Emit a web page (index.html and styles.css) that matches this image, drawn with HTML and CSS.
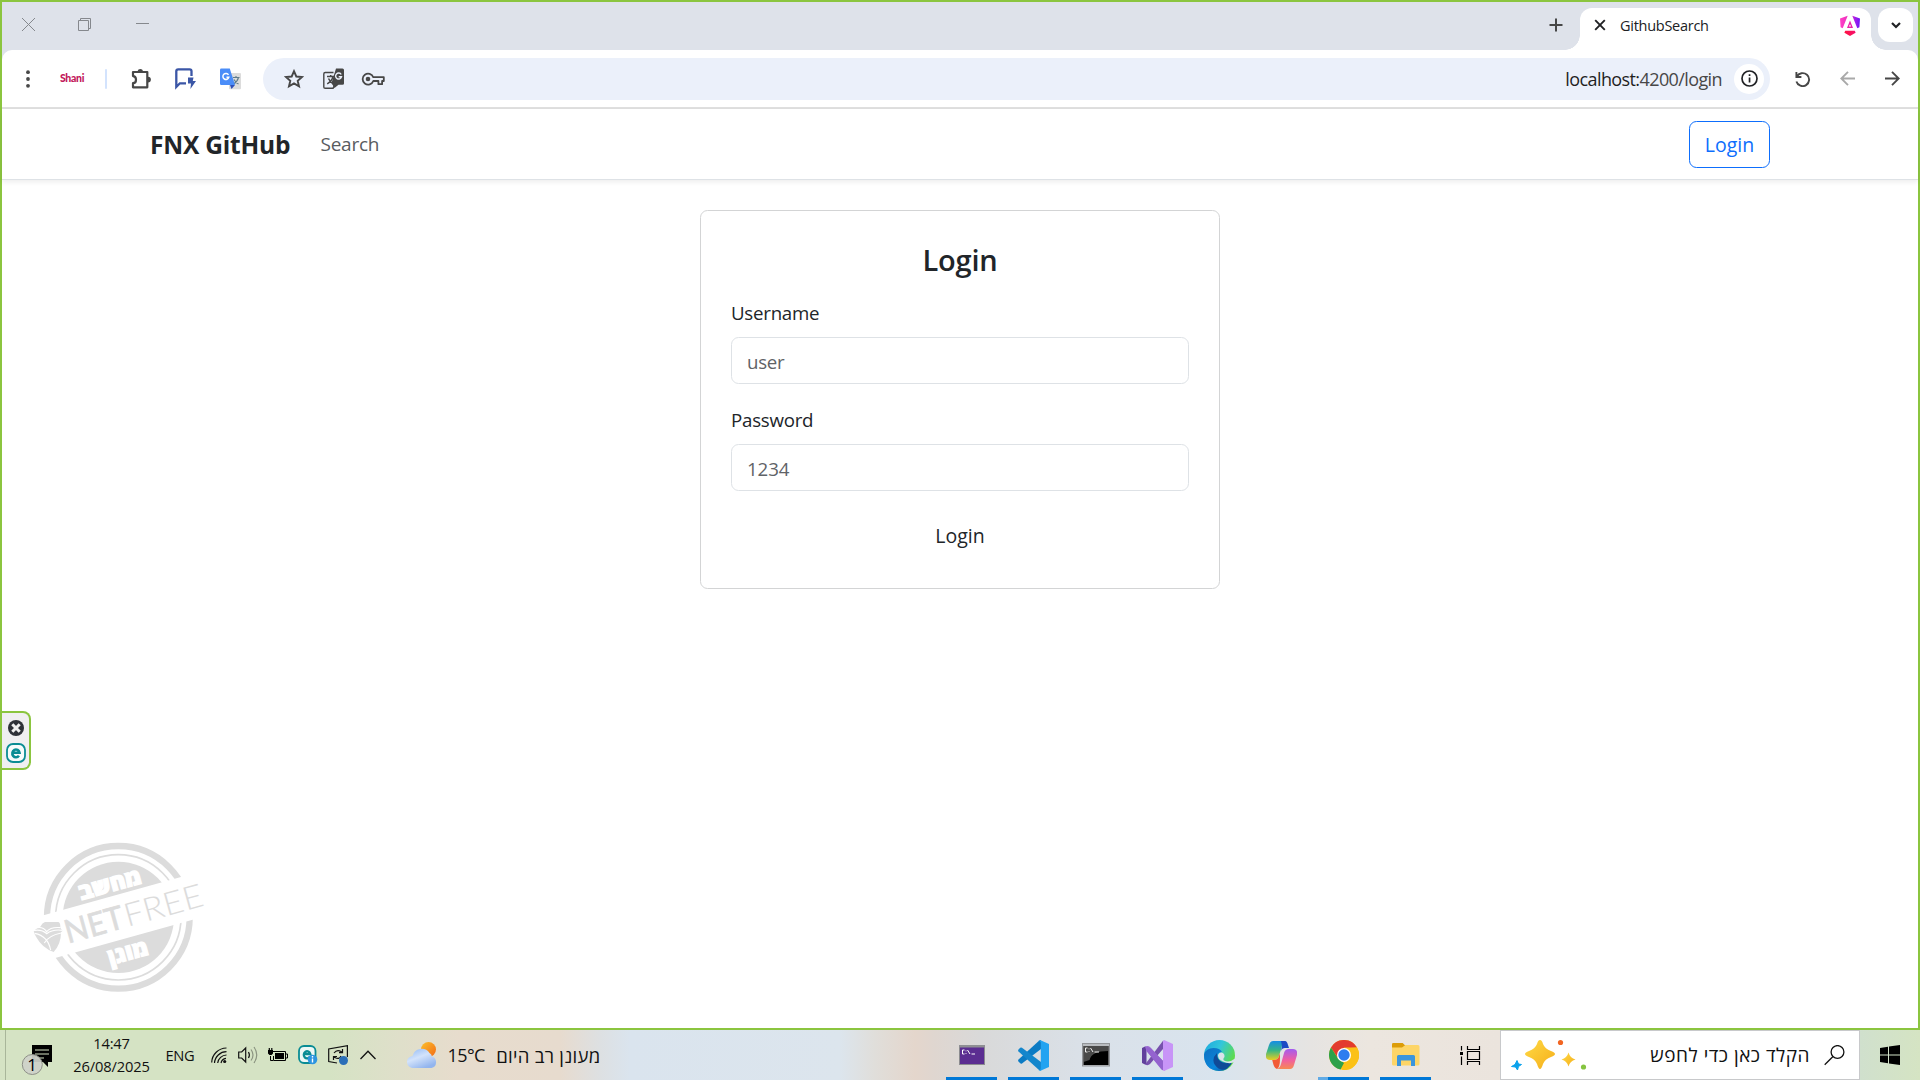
FILE: index.html
```html
<!DOCTYPE html>
<html lang="en">
<head>
<meta charset="utf-8">
<title>GithubSearch</title>
<link rel="stylesheet" href="styles.css">
</head>
<body>
<div class="window">
  <header class="titlebar">
    <div class="controls">
      <svg class="ctl-close" width="13" height="13" viewBox="0 0 13 13"><path d="M0 0L13 13M13 0L0 13"/></svg>
      <svg class="ctl-restore" width="13" height="13" viewBox="0 0 13 13"><path d="M.5 2.500h10v10H.5zM2.500 2.500V.5h10v10h-2"/></svg>
      <svg class="ctl-min" width="13" height="13" viewBox="0 0 13 13"><path d="M0 5.500h13"/></svg>
    </div>
    <svg class="new-tab" width="14" height="14" viewBox="0 0 14 14"><path d="M7 .5v13M.5 7h13"/></svg>
    <div class="tab">
      <svg class="tab-close" width="12" height="12" viewBox="0 0 12 12"><path d="M1.200 1.200l9.600 9.600M10.800 1.200l-9.600 9.600"/></svg>
      <span class="tab-title">GithubSearch</span>
      <svg class="angular" width="20" height="21" viewBox="0 0 20 21">
        <defs>
          <linearGradient id="ng" x1="0" y1="0" x2="1" y2="0"><stop offset="0" stop-color="#ff41c8"/><stop offset=".5" stop-color="#e92bb9"/><stop offset=".8" stop-color="#9a1cf0"/><stop offset="1" stop-color="#6a18f5"/></linearGradient>
          <linearGradient id="ngr" x1="0" y1="0" x2="1" y2="0"><stop offset="0" stop-color="#ff1340"/><stop offset="1" stop-color="#f5106e"/></linearGradient>
        </defs>
        <path fill="url(#ng)" d="M7.700.8L2.700 13.300.6 12.300 0 3.500zM12.300.8l5 12.500 2.100-1 .6-8.800z"/>
        <path fill="url(#ngr)" d="M5.200 15.800h9.600l.8 2L10 21l-5.600-3.200z"/>
        <path fill="#ec1fa8" d="M10 5.500l3 7.500H7z"/>
        <path fill="#fff" d="M10 9.300l1.100 2.300H8.900z"/>
      </svg>
    </div>
    <div class="tab-search"><svg width="10" height="7" viewBox="0 0 10 7"><path d="M1 1l4 4 4-4"/></svg></div>
  </header>

  <div class="toolbar">
    <svg class="menu" width="4" height="18" viewBox="0 0 4 18"><circle cx="2" cy="2.200" r="1.900"/><circle cx="2" cy="9" r="1.900"/><circle cx="2" cy="15.800" r="1.900"/></svg>
    <span class="profile">Shani</span>
    <span class="divider"></span>
    <svg class="puzzle" width="21" height="22" viewBox="0 0 21 22"><path d="M2 4h14.300v15.300H2v-4.100c1.700 0 3-1.200 3-3.500S3.700 8.100 2 8.100z" fill="none" stroke="#474747" stroke-width="2.200" stroke-linejoin="round"/><path fill="#474747" d="M6.500 3.200a2.900 2.900 0 0 1 5.600 0zM17 8.700a2.900 2.900 0 0 1 0 5.800z"/></svg>
    <svg class="chat" width="21" height="22" viewBox="0 0 21 22"><path d="M16.500 8V3.200q0-1.900-1.900-1.900H3.200q-1.900 0-1.900 1.900v15.700l3.600-3.600H11" fill="none" stroke="#3b56a6" stroke-width="2.300"/><path fill="#3b56a6" d="M13 9.500h5.500L17.800 13H21l-5.600 8 .6-5.500h-3z"/></svg>
    <svg class="gtranslate" width="21" height="22" viewBox="0 0 21 22"><rect x="9" y="5" width="12" height="16.300" rx="1" fill="#dcdcdc"/><path d="M13 9.500h6.500M16 8v1.500M18.500 9.500q-1 4-5 6.500M14 11.500q1.500 3 4.500 4.500" fill="none" stroke="#607d8b" stroke-width="1.100"/><path fill="#2f50b8" d="M10 17h5l-3.500 4z"/><path fill="#4b8df8" d="M1.200.5h8.600L15 17H1.200Q0 17 0 15.800V1.700Q0 .5 1.200.5z"/><path d="M8.500 6.900a3 3 0 1 0 .3 2.400H6.500" fill="none" stroke="#fff" stroke-width="1.500"/></svg>
    <div class="omnibox">
      <svg class="star" width="20" height="20" viewBox="0 0 20 20"><path d="M10 2.200l2.300 5.300 5.700.5-4.300 3.800 1.300 5.600-5-3-5 3 1.300-5.600L2 8l5.700-.5z" fill="none" stroke="#474747" stroke-width="1.900"/></svg>
      <svg class="page-translate" width="21" height="21" viewBox="0 0 21 21"><path d="M10.500 4.500H2.200q-1.400 0-1.400 1.400V19q0 1.200 1.400 1.200h7.900l2-4.500" fill="none" stroke="#474747" stroke-width="1.400"/><path d="M4 8.500h7.500M7.700 7v1.500M10 8.800q-1.200 4.500-5.800 7M5.500 10.500q1.500 3.500 5 5.500" fill="none" stroke="#474747" stroke-width="1.500"/><path fill="#474747" d="M13 .5h6.500q1.500 0 1.500 1.500v13.500q0 1.200-1.500 1.200h-4L11.500 20 8.500 15z"/><path d="M18.200 6.500a3 3 0 1 0 .3 2.300h-2.800" fill="none" stroke="#ebf0fa" stroke-width="1.400"/></svg>
      <svg class="key" width="24" height="14" viewBox="0 0 24 14"><path d="M12.300 5.200H22.800V9h-1.700v3.200h-3.700V9h-5.100a5.500 5.500 0 1 1 0-3.800z" fill="none" stroke="#474747" stroke-width="1.800" stroke-linejoin="round"/><circle cx="7" cy="7" r="2.300" fill="#474747"/></svg>
      <span class="url"><b>localhost:</b>4200/login</span>
      <span class="site-info"><svg width="17" height="17" viewBox="0 0 17 17"><circle cx="8.500" cy="8.500" r="7.500" fill="none" stroke="#202124" stroke-width="1.700"/><path d="M7.700 7.500h1.700v5H7.700zM7.700 4.300h1.700V6H7.700z" fill="#202124"/></svg></span>
    </div>
    <svg class="reload" width="16" height="16" viewBox="0 0 16 16"><path d="M1.400 1v5h5M1.800 5.700A6.500 6.500 0 1 1 1.400 10.500"/></svg>
    <svg class="back" width="15" height="15" viewBox="0 0 15 15"><path d="M15 7.500H1.500M8 .8L1.300 7.500 8 14.200"/></svg>
    <svg class="forward" width="15" height="15" viewBox="0 0 15 15"><path d="M0 7.500h13.500M7 .8l6.700 6.700L7 14.200"/></svg>
  </div>

  <div class="page">
    <nav class="navbar">
      <a class="brand">FNX GitHub</a>
      <a class="nav-link">Search</a>
      <button class="btn-outline">Login</button>
    </nav>
    <main class="card">
      <h1>Login</h1>
      <label>Username</label>
      <input type="text" placeholder="user">
      <label>Password</label>
      <input class="digits" type="text" placeholder="1234">
      <button class="submit">Login</button>
    </main>
  </div>

  <div class="eset-tab">
    <svg width="16" height="16" viewBox="0 0 16 16"><circle cx="8" cy="8" r="8" fill="#2e3138"/><path d="M4.300 4.300l7.400 7.400M11.700 4.300l-7.400 7.400" stroke="#f0f0f0" stroke-width="3"/></svg>
    <svg width="20" height="20" viewBox="0 0 20 20"><rect x="1" y="1" width="18" height="18" rx="6" fill="#f6fbfb" stroke="#0a8c94" stroke-width="1.800"/><path d="M6.500 9.700h7A3.600 3.900 0 1 0 12.900 12.600" fill="none" stroke="#0a8c94" stroke-width="2.600"/></svg>
  </div>

  <svg class="stamp" width="177" height="157" viewBox="90 450 531 471">
    <g fill="none" stroke="#dcdcdc"><circle cx="355" cy="682" r="214" stroke-width="19"/><circle cx="355" cy="682" r="188" stroke-width="5"/></g>
    <circle cx="355" cy="682" r="167" fill="#dcdcdc"/>
    <path fill="#fff" d="M90 687L640 534V672L90 825z"/>
    <g transform="translate(213 758) rotate(-15.500)" fill="#dcdcdc">
      <text class="st-net" x="-9" y="0" textLength="180" lengthAdjust="spacingAndGlyphs">NET</text>
      <text class="st-free" x="176" y="0" textLength="242" lengthAdjust="spacingAndGlyphs">FREE</text>
    </g>
    <g fill="#fff" class="st-heb">
      <text transform="translate(336 605) rotate(-15.500)" text-anchor="middle" textLength="192" lengthAdjust="spacingAndGlyphs">מחשב</text>
      <text transform="translate(390 809) rotate(-15.500)" text-anchor="middle" textLength="122" lengthAdjust="spacingAndGlyphs">מוגן</text>
    </g>
    <path fill="#dcdcdc" d="M101 722q10-8 20-12 6-12 14-14h40q6 2 6 14 1 8 7 12l-5 5q0 36-22 59-34-11-52-44-7-12-8-20z"/>
    <path fill="none" stroke="#fff" stroke-width="3.500" d="M98 722q26-6 42 9 18-14 48-10M104 730q40 8 48 50M183 729q-38 8-50 30M112 713q18-3 28 12 12-15 42-12"/>
  </svg>
</div>

<footer class="taskbar">
  <div class="tray">
    <svg class="notif" width="32" height="32" viewBox="0 0 32 32"><path d="M11 0h20v17h-4v5l-5-5H11z"/><path d="M14 5h14M14 9h14M14 13h9" stroke="#d6e3c4" stroke-width="1.200"/><circle cx="11.300" cy="19.500" r="10" fill="#cfd2c9" fill-opacity=".93" stroke="#8d8f88"/><text x="11" y="25.500" text-anchor="middle">1</text></svg>
    <div class="clock"><span class="time">14:47</span><span class="date">26/08/2025</span></div>
    <span class="lang">ENG</span>
    <svg class="wifi" width="17" height="17" viewBox="0 0 17 17" fill="none" stroke="#111" stroke-width="1.200"><path d="M.7 15.500A15 15 0 0 1 15.500 1M3.500 16A12 12 0 0 1 15.500 4.700M6.700 16A9 9 0 0 1 15.500 8M10 16a6 6 0 0 1 5-4.600"/><circle cx="13.700" cy="14.500" r="1.600" fill="#111" stroke="none"/></svg>
    <svg class="sound" width="20" height="18" viewBox="0 0 20 18" fill="none" stroke="#111" stroke-width="1.200"><path d="M.7 6h3l4-4v14l-4-4h-3z"/><path d="M10.500 6q1.800 3 0 6"/><path d="M13 3.500q4 5.500 0 11M16 1q5.500 8 0 16" stroke="#8b9480"/></svg>
    <svg class="battery" width="20" height="15" viewBox="0 0 20 15"><path fill="none" stroke="#000" d="M5 3.500h12.500v9H5.500V8M18 6h1.500v4H18M2.500 8v4.500H5"/><path d="M7 5h9v6H7zM0 2h5v3.500L3.500 7h-2L0 5.500zM.7 0h1.200v2H.7zM3.200 0h1.200v2H3.200z"/></svg>
    <svg class="eset" width="20" height="20" viewBox="0 0 20 20"><rect x="1" y="1" width="16.500" height="17" rx="5" fill="#eef8f6" stroke="#0a8c94" stroke-width="1.800"/><path d="M5.800 9h6.500A3.300 3.600 0 1 0 12 11.500" fill="none" stroke="#0a8c94" stroke-width="2.300"/><circle cx="14.500" cy="14.500" r="4.800" fill="#2d95e0"/><path d="M14.500 13.500v4M14.500 11v1.500" stroke="#fff" stroke-width="1.400"/></svg>
    <svg class="update" width="20" height="20" viewBox="0 0 20 20" fill="none" stroke="#111" stroke-width="1.200"><path d="M9 18L.7 16.500V4L19.400.7V12M6 8q3-4 7-1.500l1.500 1M14.500 4v3.700H11M13 11q-2 4-6 1.500L5.500 12M5.500 15v-3.500H9"/><circle cx="15.500" cy="15.500" r="4.500" fill="#2b6fb8" stroke="none"/></svg>
    <svg class="chev" width="16" height="10" viewBox="0 0 16 10"><path d="M.5 9L8 1.200 15.500 9" fill="none" stroke="#111" stroke-width="1.300"/></svg>
    <svg class="weather" width="31" height="26" viewBox="0 0 31 26"><defs><linearGradient id="sun" x1="0" y1="0" x2="1" y2="1"><stop offset="0" stop-color="#fbc02a"/><stop offset="1" stop-color="#f36a16"/></linearGradient><linearGradient id="cloud" x1="0" y1="0" x2=".6" y2="1"><stop offset="0" stop-color="#8db7f5"/><stop offset=".5" stop-color="#d3e3fb"/><stop offset="1" stop-color="#93b5ee"/></linearGradient></defs><circle cx="21.500" cy="7.500" r="7.500" fill="url(#sun)"/><path fill="url(#cloud)" d="M6.500 26a6 6 0 0 1-1-12A9.500 9.500 0 0 1 22.500 11a4.500 4.500 0 0 1 2.500 3.500A6 6 0 0 1 24.500 26z"/></svg>
    <span class="temp">15°C</span>
    <span class="forecast" lang="he" dir="rtl">מעונן רב היום</span>
  </div>
  <div class="apps">
    <div class="app running"><svg width="26" height="20" viewBox="0 0 26 20"><rect x=".5" y=".5" width="25" height="19" fill="#5b2d91" stroke="#8b8b8f"/><path d="M0 0h26v2.500H0z" fill="#8f8f93"/><path d="M5.500 5h-2v4h2M7 5.500v.8M7 8v.8M8.500 5l2.500 4M12.500 9H16" fill="none" stroke="#fff"/></svg></div>
    <div class="app running"><svg width="31" height="31" viewBox="0 0 31 31"><path fill="#0b7bc4" d="M23 0v9L4 23.500q-1 .5-1.800-.3L.5 21.500q-.8-1 0-2L21 .8z"/><path fill="#1486cc" d="M.5 11.500q-.8-1 0-2l1.700-1.700Q3 7.200 4 7.700L23 22v8.500L21 30z"/><path fill="#23a3f1" d="M22.500.3L31 4v23l-8.500 3.700q-1.200.3-2-.7 2 .5 2.300-1.500V2.500Q22.500.5 20.500 1q.8-1 2-.7z"/></svg></div>
    <div class="app running"><svg width="28" height="24" viewBox="0 0 28 24"><rect x=".5" y=".5" width="27" height="22.500" fill="#b9bcc0" stroke="#929599"/><path d="M1.500 3h25v19h-25z"/><path fill="#686868" d="M1.500 3h25v5q-17 0-19 9l-6 2z" opacity=".7"/><path d="M5.500 5h-2v4h2M7 5.500v.8M7 8v.8M8.500 5l2.500 4M12.500 9H17" fill="none" stroke="#eee"/></svg></div>
    <div class="app running"><svg width="31" height="31" viewBox="0 0 31 31"><path fill="#61409c" d="M0 8l3-1.500L4.500 7v17L3 24.500 0 23z"/><path fill="#7751ad" d="M3 24.500L21 .8V9L8 24q-2 2-5 .5z"/><path fill="#9c6bd3" d="M3 6.500q3-1 5 .5L23 23v7.500L21 30 4.500 11z"/><path fill="#c895f7" d="M22 0l9 4v23l-9 4q-1-.3-1-1V1q0-.7 1-1z"/><path fill="#9463cf" d="M9 8.500L21 21v9q-1 .5-2-1L4.500 11V7z"/></svg></div>
    <div class="app"><svg width="31" height="31" viewBox="0 0 31 31"><defs><linearGradient id="e1" x1="0" y1="0" x2="1" y2=".5"><stop offset="0" stop-color="#1ca7df"/><stop offset=".5" stop-color="#32c6db"/><stop offset="1" stop-color="#5fdc4b"/></linearGradient><linearGradient id="e2" x1="0" y1="0" x2="1" y2="1"><stop offset="0" stop-color="#0f6fc0"/><stop offset=".6" stop-color="#0a88dc"/><stop offset="1" stop-color="#0c4b9c"/></linearGradient></defs><circle cx="15.500" cy="15.500" r="15.500" fill="url(#e1)"/><path fill="url(#e2)" d="M0 14.500Q2 8 9.500 8q6.500 0 8.500 4-3.500 0-4.500 3-1 5 5 7 5 1.500 10-1-4 10-13.500 10Q0 30 0 14.500z"/><path fill="#104b97" d="M13 13q-6 6-2 12 5 7 12 3.500 4-3 5.500-7-5 3-10 1-6-3-5.500-9.500z"/><path fill="#dae3eb" d="M19 21.500q-5-2-5-6.500 2-3.500 5-2 2 1.500 1.500 4-2 2-.5 3.500 3 1.500 7 .5l4-2.500v3q-5 3.500-12 0z"/></svg></div>
    <div class="app"><svg width="31" height="28" viewBox="0 0 31 28"><defs><linearGradient id="c1" x1="0" y1="0" x2="0" y2="1"><stop offset="0" stop-color="#168de5"/><stop offset=".5" stop-color="#38b684"/><stop offset="1" stop-color="#e9ce20"/></linearGradient><linearGradient id="c2" x1="0" y1="0" x2="0" y2="1"><stop offset="0" stop-color="#a35cf0"/><stop offset=".55" stop-color="#f05fa2"/><stop offset="1" stop-color="#f78a52"/></linearGradient></defs><path fill="url(#c1)" d="M7 0h13q-3 1-4 5l-3 10q-1 4-5 4H4q-5 0-4-6L3 4q1-4 4-4z"/><path fill="#1d4bc4" d="M15 0h4q2 0 3 4l1 3h-4q-3 0-4 3l1-5z"/><path fill="url(#c2)" d="M24 28H11q3-1 4-5l3-11q1-4 5-4h4q5 0 4 6l-3 10q-1 4-4 4z"/><path fill="#f25a36" d="M8 19q4 0 5-4l1-3v6q0 8-3 10-3-1-4-6l-.8-3z"/></svg></div>
    <div class="app running grouped"><svg width="30" height="30" viewBox="0 0 30 30"><circle cx="15" cy="15" r="15" fill="#fbc116"/><path fill="#e33b2e" d="M2 7.500a15 15 0 0 1 26 0H15L9 18z"/><path fill="#2da14a" d="M2 7.500L9 18.500l6 4.500-3.500 6.600A15 15 0 0 1 2 7.500z"/><path fill="#fbc116" d="M28 7.500A15 15 0 0 1 13 29.900L21.500 18V8z"/><circle cx="15" cy="15" r="7" fill="#fff"/><circle cx="15" cy="15" r="5.700" fill="#2d7def"/></svg></div>
    <div class="app running"><svg width="28" height="24" viewBox="0 0 28 24"><path fill="#dc9c08" d="M0 1.300Q0 0 1.300 0h9.400l3 3v4H0z"/><path fill="#fdd567" d="M0 4.500h10L13.500 2H26q1.500 0 1.500 1.500V21q0 1.500-1.500 1.500H1.500Q0 22.500 0 21z"/><path fill="#3b95dc" d="M5 13.500Q5 12 6.500 12h15q1.500 0 1.500 1.500V23h-4v-5.500H9V23H5z"/></svg></div>
  </div>
  <svg class="taskview" width="21" height="19" viewBox="0 0 21 19"><path d="M1.500 0v4.500M1.500 10.500V19M7.500 0v3.500h12V0M7.500 5.500h12v8h-12zM7.500 19v-3.500h12V19" fill="none" stroke="#000" stroke-width="1.200"/><path d="M0 6h3v3H0z"/></svg>
  <div class="search">
    <svg class="sparkles" width="78" height="33" viewBox="0 0 78 33"><defs><linearGradient id="gold" x1="0" y1="0" x2="1" y2="1"><stop offset="0" stop-color="#ffda45"/><stop offset="1" stop-color="#f5ae1a"/></linearGradient></defs><path fill="url(#gold)" d="M30 1q2 0 3 4 2 5 8 7 4 1.500 4 3t-4 3q-6 2-8 7-1.500 5-3 5t-3-5q-2-5-8-7-4-1.500-4-3t4-3q6-2 8-7 1-4 3-4z"/><path fill="url(#gold)" d="M58.500 13.500q1.500 5.500 7 7-5.500 1.500-7 7-1.500-5.500-7-7 5.500-1.500 7-7z"/><path fill="#0aa2ec" stroke="#0aa2ec" d="M7 21.500l1.500 3.500 3 .5-3 2-1 3.500-2-3-4-.5 3.500-2z"/><circle cx="50.500" cy="3.500" r="2.600" fill="#f26522"/><circle cx="73.500" cy="28" r="2.600" fill="#85c440"/></svg>
    <span class="search-text" lang="he" dir="rtl">הקלד כאן כדי לחפש</span>
    <svg class="magnifier" width="21" height="21" viewBox="0 0 21 21"><circle cx="13.500" cy="7" r="6.400" fill="none" stroke="#111" stroke-width="1.300"/><path d="M9 11.500L.7 19.800" stroke="#111" stroke-width="1.300"/></svg>
  </div>
  <svg class="start" width="20" height="20" viewBox="0 0 20 20"><path d="M0 2.900L8 1.700v7.800H0zM9 1.500L20 0v9.500H9zM0 10.500h8v7.800l-8-1.200zM9 10.500h11V20L9 18.500z"/></svg>
</footer>
</body>
</html>
```
FILE: styles.css
```css
* { box-sizing: border-box; }
body {
  margin: 0; width: 1920px; height: 1080px; overflow: hidden;
  display: flex; flex-direction: column;
  font-family: "Open Sans", "Noto Sans", sans-serif; color: #212529; background: #fff;
}
svg { display: block; flex: none; }
span, a, button { white-space: nowrap; }

.window { position: relative; height: 1030px; border: 2px solid #8bc53f; display: flex; flex-direction: column; background: #dee2ea; }

/* Title bar */
.titlebar { height: 48px; flex: none; display: flex; }
.controls { display: flex; flex: 1; padding: 16px 0 0 20px; fill: none; stroke: #85888d; }
.ctl-restore { margin-left: 43px; }
.ctl-min { margin-left: 45px; }
.new-tab { margin: 16px 17px 0 0; stroke: #474747; stroke-width: 2; }
.tab {
  position: relative; width: 291px; margin-top: 6px; padding: 0 11px 8px 14px;
  display: flex; align-items: center; background: #fff; border-radius: 12px 12px 0 0;
}
.tab::before, .tab::after { content: ""; position: absolute; bottom: 0; width: 15px; height: 15px; }
.tab::before { left: -15px; background: radial-gradient(circle at 0 0, transparent 14.500px, #fff 15px); }
.tab::after { right: -15px; background: radial-gradient(circle at 100% 0, transparent 14.500px, #fff 15px); }
.tab-close { stroke: #202124; stroke-width: 1.900; }
.tab-title { margin-left: 14px; flex: 1; font-size: 14.500px; letter-spacing: -.27px; color: #202124; }
.tab-search { width: 35px; height: 34px; margin: 6px 5px 0 7px; border-radius: 12px; background: #fff; display: grid; place-items: center; fill: none; stroke: #202124; stroke-width: 2.200; }

/* Toolbar */
.toolbar { height: 57px; flex: none; display: flex; align-items: center; background: #fff; border-radius: 10px 10px 0 0; }
.menu { margin-left: 23.500px; fill: #474747; }
.profile { width: 45px; text-align: center; margin: 0 0 2px 20px; font: 900 10.500px "Lato", sans-serif; letter-spacing: -.3px; color: #c2185b; }
.divider { width: 2.500px; height: 20px; margin-left: 10px; background: #d3e3fd; border-radius: 1px; }
.puzzle { margin-left: 24px; }
.chat { margin-left: 23px; }
.gtranslate { margin-left: 24px; }
.omnibox { width: 1507px; height: 42px; margin-left: 22px; padding: 0 6px 0 21px; border-radius: 21px; background: #ebf0fa; display: flex; align-items: center; }
.page-translate { margin-left: 19px; }
.key { margin-left: 17px; }
.url { flex: 1; text-align: right; padding-right: 12px; font-size: 18px; letter-spacing: -.6px; color: #474747; }
.url b { font-weight: 400; color: #1f1f1f; }
.site-info { width: 30px; height: 30px; border-radius: 50%; background: #fff; display: grid; place-items: center; }
.reload, .back, .forward { fill: none; stroke: #474747; stroke-width: 1.900; }
.reload { margin-left: 25px; }
.back { margin-left: 29px; stroke: #a9a9a9; }
.forward { margin-left: 30px; }

/* Page */
.page { flex: 1; border-top: 2px solid #e0e0e0; background: #fff; display: flex; flex-direction: column; align-items: center; }
.navbar { width: 100%; height: 71px; flex: none; padding: 0 148px; display: flex; align-items: center; border-bottom: 1px solid #dee2e6; box-shadow: 0 2px 5px rgba(0,0,0,.075); }
.brand { width: 141px; font-size: 24.500px; font-weight: 700; letter-spacing: -.2px; }
.nav-link { margin-left: 29.500px; flex: 1; font-size: 19px; letter-spacing: -.25px; color: #595c5f; }
.btn-outline { width: 81px; height: 47px; padding: 0; font: 19.500px "Open Sans", sans-serif; letter-spacing: 0; color: #0d6efd; background: none; border: 1px solid #0d6efd; border-radius: 7.500px; }
.card { width: 520px; height: 379px; margin-top: 30px; padding: 28px 30px; display: flex; flex-direction: column; border: 1px solid #d3d4d5; border-radius: 7.500px; }
.card h1 { margin: 0 0 17px; text-align: center; font-size: 29px; line-height: 42px; font-weight: 600; letter-spacing: -.2px; }
.card label { font-size: 18.700px; line-height: 30px; margin-bottom: 9px; letter-spacing: -.25px; }
.card input { height: 47px; width: 458px; margin-bottom: 21px; padding: 1px 15px 0; font: 18.700px "Open Sans", sans-serif; letter-spacing: -.3px; color: #212529; border: 1px solid #dee2e6; border-radius: 7.500px; outline: none; }
.card input.digits { letter-spacing: -.1px; }
.card input::placeholder { color: #5f6367; opacity: 1; }
.submit { height: 47px; border: 0; background: none; font: 19.500px "Open Sans", sans-serif; color: #212529; }

/* Overlays on the page */
.eset-tab { position: absolute; left: 0; top: 709px; width: 29px; height: 59px; padding-top: 7px; display: flex; flex-direction: column; align-items: center; gap: 7px; background: #f0eff1; border: 2px solid #8bc53f; border-left: 0; border-radius: 0 8px 8px 0; }
.stamp { position: absolute; left: 28px; top: 838px; }
.st-net { font: 400 97px "Lato", sans-serif; stroke: #dcdcdc; stroke-width: 2; }
.st-free { font: 300 97px "Lato", sans-serif; }
.st-heb { font: 800 66px "Open Sans", "DejaVu Sans", sans-serif; stroke: #fff; stroke-width: 4; }

/* Taskbar */
.taskbar {
  height: 50px; display: flex; align-items: center; color: #111;
  background: linear-gradient(90deg, #d5e3c4 0, #d5e3c4 330px, #dfdfca 400px, #e7dccd 460px, #e7dbce 560px, #dde0e2 600px, #dae4ee 630px, #dce5ed 840px, #e0deda 875px, #e4d6cc 915px, #dfd6d0 935px, #d9d9d9 980px, #dae1e9 1090px, #d9e4ee 1220px, #e6e4e2 1310px, #ece6df 1370px, #ebe4dd 1500px, #d0e0cd 1860px, #d5e4c3 1920px);
}
.tray { width: 946px; height: 50px; padding-left: 15px; margin-left: 5px; margin-right: -5px; border-left: 1px solid #a9b69a; display: flex; align-items: center; flex: none; }
.notif { margin-top: 12px; font-size: 17px; }
.clock { width: 94px; margin-left: 11.500px; display: flex; flex-direction: column; align-items: center; font-size: 14.700px; line-height: 23px; letter-spacing: -.15px; }
.lang { width: 30px; margin-left: 7px; font-size: 14.700px; letter-spacing: -.4px; }
.wifi { margin-left: 15px; }
.sound { margin-left: 10px; }
.battery { margin-left: 10px; }
.eset { margin-left: 10px; }
.update { margin-left: 10px; }
.chev { margin-left: 12px; }
.weather { margin-left: 31px; }
.temp { width: 38px; margin-left: 10px; font-size: 18px; letter-spacing: -.6px; }
.forecast { width: 104px; margin-left: 11px; font-size: 18.500px; letter-spacing: .3px; }
.apps { display: flex; gap: 11px; }
.app { width: 51px; height: 50px; display: grid; place-items: center; border-bottom: 3px solid transparent; padding-top: 3px; }
.running { border-bottom-color: #0078d7; }
.grouped { background: linear-gradient(90deg, #62abe6 10px, #0078d7 10px) bottom / 100% 3px no-repeat border-box; border-bottom-color: transparent; }
.taskview { margin-left: 29px; }
.search { width: 360px; height: 50px; margin-left: 19px; padding: 0 14px 0 9px; display: flex; align-items: center; background: #fff; border: 1px solid #c8c9cb; flex: none; }
.search-text { width: 162px; margin-left: 60px; font-size: 19px; letter-spacing: .5px; }
.magnifier { margin-left: 14px; }
.start { margin-left: 20px; }
```
